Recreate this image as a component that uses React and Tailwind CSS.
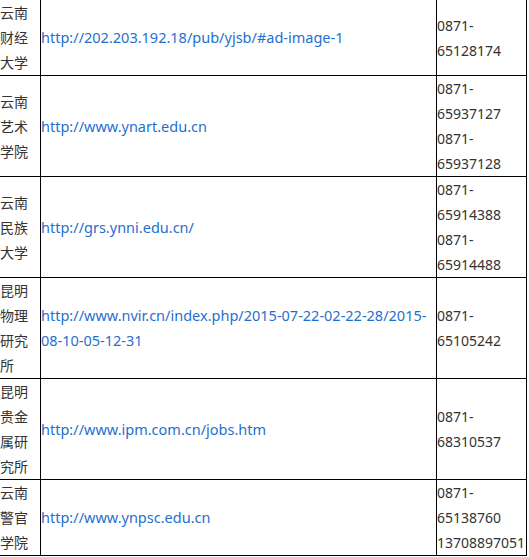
const rows = [
  { name: '云南财经大学', url: ['http://202.203.192.18/pub/yjsb/#ad-image-1'], phones: ['0871-65128174'] },
  { name: '云南艺术学院', url: ['http://www.ynart.edu.cn'], phones: ['0871-65937127', '0871-65937128'] },
  { name: '云南民族大学', url: ['http://grs.ynni.edu.cn/'], phones: ['0871-65914388', '0871-65914488'] },
  {
    name: '昆明物理研究所',
    url: ['http://www.nvir.cn/index.php/2015-07-22-02-22-28/2015-', '08-10-05-12-31'],
    phones: ['0871-65105242'],
  },
  { name: '昆明贵金属研究所', url: ['http://www.ipm.com.cn/jobs.htm'], phones: ['0871-68310537'] },
  { name: '云南警官学院', url: ['http://www.ynpsc.edu.cn'], phones: ['0871-65138760', '13708897051'] },
];

const App = () => {
  return (
    <div
      className="w-[529px] bg-white text-[14px] leading-[25px] text-[#333333]"
      style={{ fontFamily: '"Noto Sans", "Noto Sans CJK SC", sans-serif' }}
    >
      <div className="grid grid-cols-[41px_396px_90px]">
        {rows.map((row) => (
          <div key={row.name} className="contents">
            <div className="flex items-center border-r border-b border-black">
              <span className="break-all">{row.name}</span>
            </div>
            <div className="flex items-center border-r border-b border-black">
              <a href="#" className="text-[14.5px] text-[#1f6fcf]">
                {row.url.map((part, i) => (
                  <span key={i} className="block whitespace-nowrap">{part}</span>
                ))}
              </a>
            </div>
            <div className="flex items-center border-r border-b border-black">
              <div>
                {row.phones.map((p) => {
                  const [area, num] = p.includes('-') ? [p.split('-')[0] + '-', p.split('-')[1]] : [null, p];
                  return (
                    <div key={p}>
                      {area && <div>{area}</div>}
                      <div>{num}</div>
                    </div>
                  );
                })}
              </div>
            </div>
          </div>
        ))}
      </div>
    </div>
  );
};

export default App;
